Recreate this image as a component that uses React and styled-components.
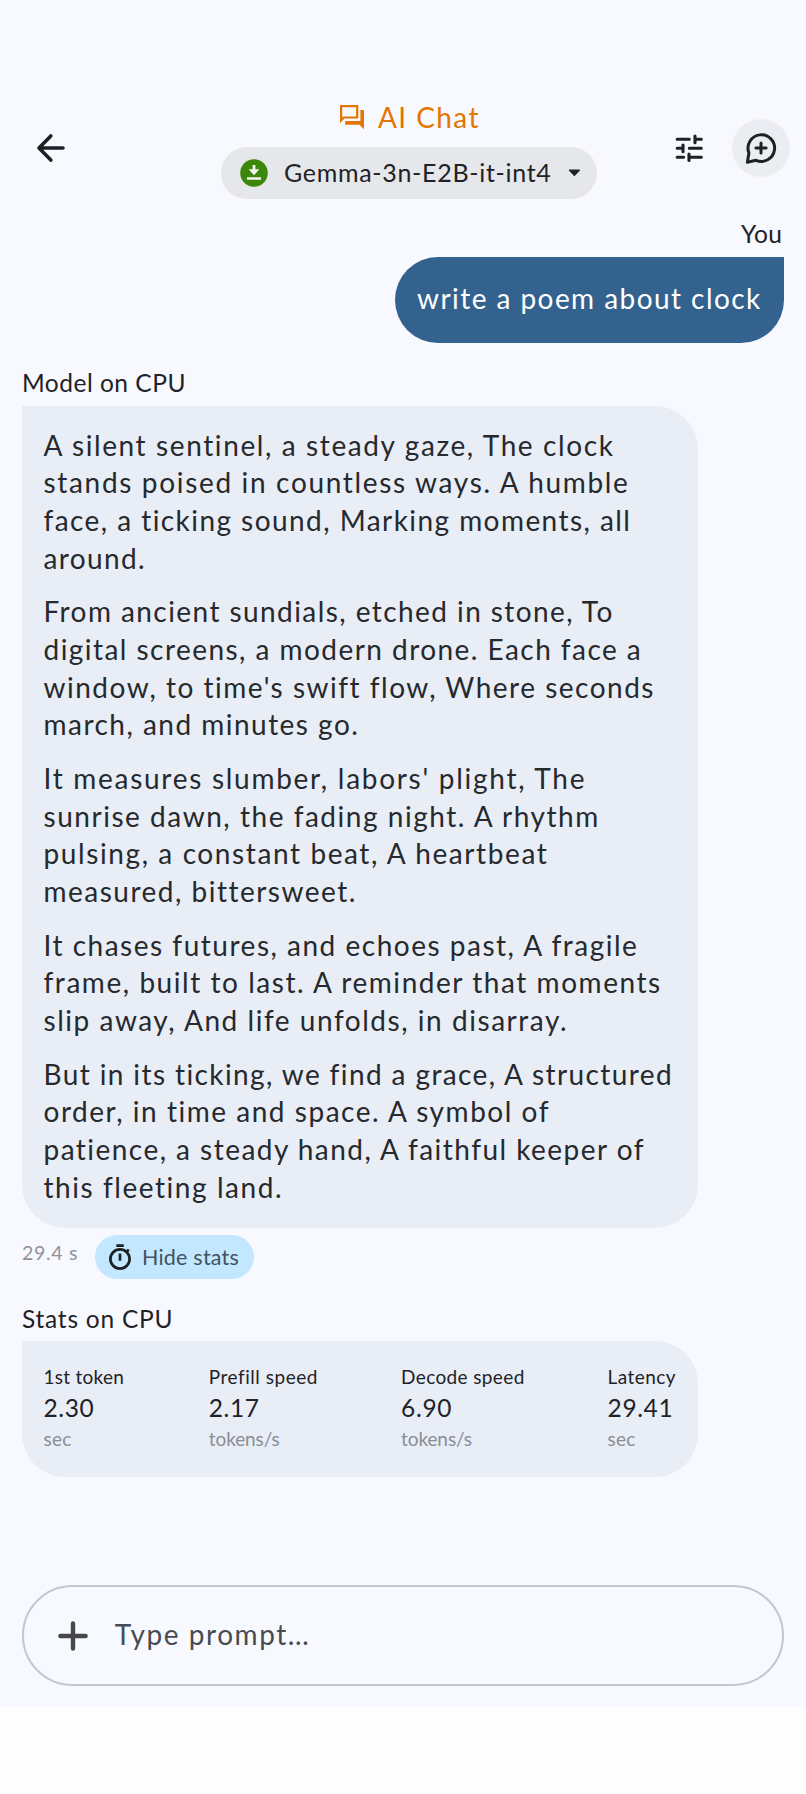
import React from "react";
import styled, { createGlobalStyle } from "styled-components";

const GlobalStyle = createGlobalStyle`
  * { box-sizing: border-box; }
  body {
    margin: 0;
    background: #fefefe;
    color: #1f2226;
    font-family: Lato, "Open Sans", sans-serif;
    font-variant-ligatures: none;
    font-kerning: normal;
  }
`;

const Screen = styled.div`
  display: flex;
  flex-direction: column;
  width: 806px;
  height: 1707px;
  background: #f8f9ff;
`;

const Header = styled.header`
  display: grid;
  grid-template-columns: 221px 375.5px 1fr;
  padding-top: 100px;
  height: 199px;
`;

const NavSide = styled.div`
  display: flex;
  align-items: center;
  padding: 0 0 3px 36px;
`;

const ActionSide = styled.div`
  display: flex;
  align-items: center;
  justify-content: flex-end;
  gap: 28px;
  padding: 0 16px 3px 0;
`;

const IconButton = styled.button`
  display: flex;
  align-items: center;
  justify-content: center;
  width: ${(p) => p.$size}px;
  height: ${(p) => p.$size}px;
  flex: none;
  border: 0;
  padding: 0;
  border-radius: 50%;
  color: #1d2024;
  background: ${(p) => (p.$filled ? "#ecedf2" : "transparent")};
`;

const TitleColumn = styled.div`
  display: flex;
  flex-direction: column;
  justify-content: space-between;
`;

const Title = styled.h1`
  display: flex;
  align-items: center;
  gap: 12px;
  margin: 0;
  padding-left: 118px;
  color: #e37500;
  font-size: 28px;
  font-weight: 400;
  line-height: 34px;
  letter-spacing: 1.4px;
  white-space: nowrap;
`;

const ModelPicker = styled.button`
  display: flex;
  align-items: center;
  height: 52px;
  border: 0;
  border-radius: 26px;
  padding: 0 15.5px 0 19px;
  background: #e6e7eb;
  color: inherit;
  font: inherit;
`;

const ModelName = styled.span`
  flex: 1;
  padding: 0 0 2px 16px;
  font-size: 25px;
  letter-spacing: 0.69px;
  text-align: left;
  white-space: nowrap;
`;

const Thread = styled.main`
  display: flex;
  flex-direction: column;
  align-items: flex-start;
  padding: 20.2px 21.7px 0 22px;
`;

const Sender = styled.div`
  align-self: ${(p) => (p.$own ? "flex-end" : "flex-start")};
  margin-top: ${(p) => p.$gap || 0}px;
  padding-right: ${(p) => (p.$own ? 2 : 0)}px;
  font-size: 24.5px;
  line-height: 30px;
  letter-spacing: ${(p) => p.$track}px;
  white-space: nowrap;
`;

const UserBubble = styled.div`
  display: flex;
  align-items: center;
  align-self: flex-end;
  width: 389.3px;
  height: 86.3px;
  margin-top: 7.6px;
  padding: 0 0 3px 22px;
  border-radius: 43px 0 43px 43px;
  background: #33628e;
  color: #fff;
  font-size: 28px;
  letter-spacing: 1.44px;
  white-space: nowrap;
`;

const ModelBubble = styled.article`
  display: flex;
  flex-direction: column;
  gap: 16px;
  width: 675.5px;
  height: 822.5px;
  margin-top: 7.5px;
  padding: 21.2px 0 0 21.5px;
  border-radius: 0 43px 43px 43px;
  background: #e8edf6;
`;

const Stanza = styled.p`
  margin: 0;
  color: #26292d;
  font-size: 28px;
  line-height: 37.65px;
  white-space: nowrap;
`;

const Line = styled.span`
  display: block;
  letter-spacing: ${(p) => p.$track}px;
`;

const MetaRow = styled.div`
  display: flex;
  align-items: flex-start;
  gap: 16px;
  margin-top: 7px;
`;

const Elapsed = styled.span`
  width: 56.5px;
  padding-top: 6px;
  color: #909298;
  font-size: 19.5px;
  line-height: 24px;
  letter-spacing: 0.7px;
  white-space: nowrap;
`;

const StatsToggle = styled.button`
  display: flex;
  align-items: center;
  gap: 9px;
  width: 159.5px;
  height: 44px;
  border: 0;
  border-radius: 22px;
  padding: 0 0 0 13.5px;
  background: #c2e7ff;
  color: #42525f;
  font: inherit;
  font-size: 21.5px;
  letter-spacing: 0.21px;
  white-space: nowrap;
`;

const StatsCard = styled.section`
  display: grid;
  grid-template-columns: 165.3px 192.3px 206.5px auto;
  align-content: start;
  width: 675.5px;
  height: 136px;
  margin-top: 7px;
  padding: 22.7px 0 0 21.5px;
  border-radius: 0 43px 43px 43px;
  background: #e8edf6;
`;

const Stat = styled.div`
  display: flex;
  flex-direction: column;
  white-space: nowrap;
`;

const StatLabel = styled.span`
  font-size: 19px;
  line-height: 25.6px;
  letter-spacing: ${(p) => p.$track}px;
`;

const StatValue = styled.span`
  font-size: 24.5px;
  line-height: 37.4px;
  letter-spacing: ${(p) => p.$track}px;
`;

const StatUnit = styled.span`
  color: #8a8e96;
  font-size: 19px;
  line-height: 24px;
  letter-spacing: ${(p) => p.$track}px;
`;

const Composer = styled.footer`
  display: flex;
  align-items: center;
  height: 101px;
  margin: auto 21.7px 21px 22px;
  border: 2px solid #c2c7cf;
  border-radius: 51px;
  padding-left: 32.6px;
`;

const Placeholder = styled.span`
  padding: 0 0 3px 26.2px;
  color: #474c53;
  font-size: 28px;
  letter-spacing: 1.55px;
  white-space: nowrap;
`;

const BackIcon = () => (
  <svg width="30" height="30" viewBox="0 0 30 30" fill="none" stroke="currentColor" strokeWidth="3.6" strokeLinecap="round" strokeLinejoin="round">
    <path d="M27 15H3.2M14.8 2.9L3 15l11.8 12.1" />
  </svg>
);

const ForumIcon = () => (
  <svg width="27" height="27" viewBox="0 0 27 27" fill="currentColor">
    <path fillRule="evenodd" d="M1 1H19.3V14.6H5.4L1 19.2ZM3.2 3.2V13.4L4.3 12.4H17.1V3.2Z" />
    <path d="M21.4 6H25V25.2L20.4 20.8H6.2V17H21.4Z" />
  </svg>
);

const DownloadedIcon = () => (
  <svg width="28" height="28" viewBox="0 0 28 28">
    <circle cx="14" cy="14" r="13.8" fill="#3a8709" />
    <path fill="#f3f5f0" d="M12.6 6h2.8v4.3h4L14 16.3 8.6 10.3h4zM7 18.2h14v2.6H7z" />
  </svg>
);

const CaretIcon = () => (
  <svg width="13" height="8" viewBox="0 0 13 8">
    <path d="M1.6 1.2H11.2L6.4 6.4Z" fill="currentColor" stroke="currentColor" strokeWidth="1.4" strokeLinejoin="round" />
  </svg>
);

const TuneIcon = () => (
  <svg width="30" height="30" viewBox="0 0 30 30" fill="none" stroke="currentColor" strokeWidth="3.1" strokeLinecap="round">
    <path d="M3.2 6.3H15.3M21 3.1V9.7M21 6.3H27.3M3.2 15.3H9M9 12.1V18.7M15.3 15.3H27.3M3.2 24.3H9.6M15 21.1V27.5M15 24.3H27.3" />
  </svg>
);

const NewChatIcon = () => (
  <svg width="34" height="34" viewBox="0 0 34 34" fill="none" stroke="currentColor" strokeWidth="3" strokeLinecap="round" strokeLinejoin="round">
    <path d="M4.9 21.9A13.3 13.3 0 1 1 12 29.3L3.4 31.2Z" />
    <path d="M17 11.9v10.2M11.9 17h10.2" />
  </svg>
);

const TimerIcon = () => (
  <svg width="25" height="28" viewBox="0 0 25 28" fill="none" stroke="#1d2024" strokeWidth="2.7">
    <circle cx="12" cy="16" r="9.6" />
    <path d="M8.4 2.7h7.4M12 10.5v7.3M18 9.4l2.8-2.8" />
  </svg>
);

const PlusIcon = () => (
  <svg width="32" height="32" viewBox="0 0 32 32" fill="none" stroke="#46474b" strokeWidth="4.4" strokeLinecap="round">
    <path d="M16 3.4v25.2M3.4 16h25.2" />
  </svg>
);

const stanzas = [
  [
    ["A silent sentinel, a steady gaze, The clock", 1.61],
    ["stands poised in countless ways. A humble", 1.67],
    ["face, a ticking sound, Marking moments, all", 1.44],
    ["around.", 1.36],
  ],
  [
    ["From ancient sundials, etched in stone, To", 1.43],
    ["digital screens, a modern drone. Each face a", 1.45],
    ["window, to time's swift flow, Where seconds", 1.5],
    ["march, and minutes go.", 1.48],
  ],
  [
    ["It measures slumber, labors' plight, The", 1.72],
    ["sunrise dawn, the fading night. A rhythm", 1.53],
    ["pulsing, a constant beat, A heartbeat", 1.6],
    ["measured, bittersweet.", 1.5],
  ],
  [
    ["It chases futures, and echoes past, A fragile", 1.51],
    ["frame, built to last. A reminder that moments", 1.55],
    ["slip away, And life unfolds, in disarray.", 1.54],
  ],
  [
    ["But in its ticking, we find a grace, A structured", 1.39],
    ["order, in time and space. A symbol of", 1.53],
    ["patience, a steady hand, A faithful keeper of", 1.46],
    ["this fleeting land.", 1.55],
  ],
];

const stats = [
  { label: ["1st token", 0.27], value: ["2.30", 0.6], unit: ["sec", 0.22] },
  { label: ["Prefill speed", 0.53], value: ["2.17", 0.6], unit: ["tokens/s", -0.1] },
  { label: ["Decode speed", 0.37], value: ["6.90", 0.65], unit: ["tokens/s", -0.1] },
  { label: ["Latency", 0.45], value: ["29.41", 0.6], unit: ["sec", 0.22] },
];

export default function App() {
  return (
    <>
      <GlobalStyle />
      <Screen>
        <Header>
          <NavSide>
            <IconButton $size={30} aria-label="Back"><BackIcon /></IconButton>
          </NavSide>
          <TitleColumn>
            <Title><ForumIcon />AI Chat</Title>
            <ModelPicker>
              <DownloadedIcon />
              <ModelName>Gemma-3n-E2B-it-int4</ModelName>
              <CaretIcon />
            </ModelPicker>
          </TitleColumn>
          <ActionSide>
            <IconButton $size={30} aria-label="Settings"><TuneIcon /></IconButton>
            <IconButton $size={58} $filled aria-label="New chat"><NewChatIcon /></IconButton>
          </ActionSide>
        </Header>
        <Thread>
          <Sender $own $track={0.4}>You</Sender>
          <UserBubble>write a poem about clock</UserBubble>
          <Sender $gap={25} $track={0.5}>Model on CPU</Sender>
          <ModelBubble>
            {stanzas.map((lines, i) => (
              <Stanza key={i}>
                {lines.map(([text, track]) => (
                  <Line key={text} $track={track}>{text}</Line>
                ))}
              </Stanza>
            ))}
          </ModelBubble>
          <MetaRow>
            <Elapsed>29.4 s</Elapsed>
            <StatsToggle><TimerIcon />Hide stats</StatsToggle>
          </MetaRow>
          <Sender $gap={25} $track={0.77}>Stats on CPU</Sender>
          <StatsCard>
            {stats.map(({ label, value, unit }) => (
              <Stat key={label[0]}>
                <StatLabel $track={label[1]}>{label[0]}</StatLabel>
                <StatValue $track={value[1]}>{value[0]}</StatValue>
                <StatUnit $track={unit[1]}>{unit[0]}</StatUnit>
              </Stat>
            ))}
          </StatsCard>
        </Thread>
        <Composer>
          <PlusIcon />
          <Placeholder>Type prompt…</Placeholder>
        </Composer>
      </Screen>
    </>
  );
}
